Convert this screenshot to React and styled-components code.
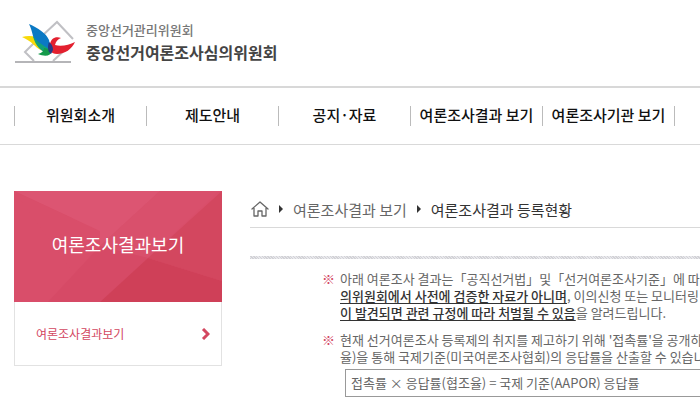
import React from 'react'
import styled, { createGlobalStyle } from 'styled-components';

const GlobalStyle = createGlobalStyle`
    *{
        box-sizing: border-box;
    }
    body{
        margin: 0;
        background: #fff;
        color: #666;
        font-family: 'Noto Sans CJK KR', 'Noto Sans', sans-serif;
        font-size: 13px;
        overflow-x: hidden;
    }
    a{
        color: inherit;
        text-decoration: none;
    }
    ul, ol, p, h2{
        margin: 0;
        padding: 0;
        list-style: none;
    }
`;

const menus = ['위원회소개', '제도안내', '공지·자료', '여론조사결과 보기', '여론조사기관 보기'];

function Logo() {
    return (
        <LogoLink href="#">
            <svg width="62" height="44" viewBox="0 0 62 44" aria-hidden="true">
                <path d="M28 15 L42 2 L58 19 M53 27 L38 41 M19 41 L10 32 L19 23" fill="none" stroke="#c0c0c4" strokeWidth="2" />
                <path d="M0 42 H56" stroke="#b5b5b8" strokeWidth="2" />
                <path d="M7 17 C14 15 22 16 27 20 L31 31 C26 31 22 28 19 25 C15 21 11 19 7 17Z" fill="#f8d908" />
                <path d="M14 4 C23 8 31 13 34 20 C35 24 35 28 34 33 C28 28 20 23 18 16 C17 12 16 8 14 4Z" fill="#0b79c4" />
                <path d="M18 16 C22 22 28 25 34 29 L33 34 C27 32 20 26 18 16Z" fill="#12a07a" />
                <path d="M60 22 C54 25 46 27 40 25 C41 21 43 19 46 18 C40 16 36 19 35 24 C34 30 36 34 42 34 C50 34 57 29 60 22Z" fill="#e3202f" />
                <path d="M23 34 C27 33 29 31 29 28 C33 29 36 29 37 31 C36 36 30 37 23 34Z" fill="#159a4b" />
                <path d="M34 22 C37 24 38 27 38 30 L36 34 C33 32 32 27 34 22Z" fill="#273a86" />
            </svg>
            <LogoText>
                <span>중앙선거관리위원회</span>
                <strong>중앙선거여론조사심의위원회</strong>
            </LogoText>
        </LogoLink>
    )
}

function SideMenu() {
    return (
        <Side>
            <SideTitle>
                <svg viewBox="0 0 208 111" preserveAspectRatio="none" aria-hidden="true">
                    <path d="M0 0 H208 V111 H0Z" fill="#d94e6a" />
                    <path d="M0 0 H146 L86 55 L58 27Z" fill="#dc5572" />
                    <path d="M0 0 L86 40 V55 L58 80Z" fill="#d94e6a" />
                    <path d="M146 0 H205 L134 67 L86 55Z" fill="#d9506c" />
                    <path d="M86 55 L134 67 L86 111 H34Z" fill="#d64a66" />
                    <path d="M208 0 L134 67 L208 90Z" fill="#d3475f" />
                    <path d="M134 67 L208 90 V111 H86Z" fill="#cf4058" />
                </svg>
                <h2>여론조사결과보기</h2>
            </SideTitle>
            <SideLink href="#">
                여론조사결과보기
                <svg width="9" height="12" viewBox="0 0 9 12" aria-hidden="true">
                    <path d="M2 1 L7 6 L2 11" fill="none" stroke="#d3475f" strokeWidth="3" />
                </svg>
            </SideLink>
        </Side>
    )
}

function Arrow() {
    return (
        <svg width="4" height="8" viewBox="0 0 4 8" aria-hidden="true">
            <path d="M0 0 L4 4 L0 8Z" fill="#333" />
        </svg>
    )
}

function Breadcrumb() {
    return (
        <Crumbs>
            <a href="#" aria-label="홈">
                <svg width="18" height="16" viewBox="0 0 18 16" aria-hidden="true">
                    <path d="M1 8 L9 1 L17 8 M3 7 V15 H7 V10 H11 V15 H15 V7" fill="none" stroke="#666" strokeWidth="1.3" strokeLinejoin="round" strokeLinecap="round" />
                </svg>
            </a>
            <Arrow />
            <a href="#">여론조사결과 보기</a>
            <Arrow />
            <Current href="#">여론조사결과 등록현황</Current>
        </Crumbs>
    )
}

function App() {
    return (
        <>
            <GlobalStyle />
            <Header>
                <Logo />
            </Header>
            <Nav>
                <ul>
                    {menus.map((menu) => (
                        <li key={menu}><a href="#">{menu}</a></li>
                    ))}
                </ul>
            </Nav>
            <Container>
                <SideMenu />
                <Content>
                    <Breadcrumb />
                    <Hatch />
                    <Notices>
                        <Notice>
                            아래 여론조사 결과는「공직선거법」및「선거여론조사기준」에 따라 등록된 자료로 중앙선거여론조사심<br />
                            <Underlined>의위원회에서 사전에 검증한 자료가 아니며</Underlined>, 이의신청 또는 모니터링 과정에서<br />
                            <Underlined>이 발견되면 관련 규정에 따라 처벌될 수 있음</Underlined>을 알려드립니다.
                        </Notice>
                        <Notice>
                            현재 선거여론조사 등록제의 취지를 제고하기 위해 '접촉률'을 공개하고 있으며<br />
                            율)을 통해 국제기준(미국여론조사협회)의 응답률을 산출할 수 있습니다.
                            <Formula>접촉률 × 응답률(협조율) = 국제 기준(AAPOR) 응답률</Formula>
                        </Notice>
                    </Notices>
                </Content>
            </Container>
        </>
    )
}

const Header = styled.header`
    padding: 20px 15px 22px;
    border-bottom: 2px solid #d8d8d8;
`;

const LogoLink = styled.a`
    display: flex;
    align-items: center;
    gap: 9px;
    height: 44px;
`;

const LogoText = styled.span`
    display: flex;
    flex-direction: column;
    white-space: nowrap;
    span{
        font-size: 13px;
        line-height: 20px;
        font-weight: 500;
        color: #777;
    }
    strong{
        font-size: 16px;
        line-height: 24px;
        color: #444;
    }
`;

const Nav = styled.nav`
    padding: 18px 14px;
    border-bottom: 1px solid #d9d9d9;
    ul{
        display: flex;
    }
    li{
        flex: none;
        width: 132px;
        height: 20px;
        border-left: 1px solid #bbb;
        white-space: nowrap;
        text-align: center;
        font-size: 15px;
        line-height: 18px;
        font-weight: 500;
        color: #111;
    }
    li:last-child{
        width: 133px;
        border-right: 1px solid #bbb;
    }
`;

const Container = styled.div`
    display: flex;
    align-items: flex-start;
    gap: 28px;
    padding: 46px 0 0 14px;
`;

const Side = styled.aside`
    flex: none;
    width: 208px;
`;

const SideTitle = styled.div`
    display: grid;
    height: 111px;
    svg, h2{
        grid-area: 1 / 1;
    }
    svg{
        width: 100%;
        height: 111px;
    }
    h2{
        position: relative;
        text-align: center;
        font-size: 18px;
        line-height: 106px;
        font-weight: 400;
        color: #fff;
    }
`;

const SideLink = styled.a`
    display: flex;
    align-items: center;
    justify-content: space-between;
    height: 64px;
    padding: 0 11px 0 21px;
    border: 1px solid #e2e2e2;
    border-top: 0;
    font-size: 12px;
    color: #d3475f;
`;

const Content = styled.main`
    flex: 1;
    min-width: 0;
    overflow: hidden;
    white-space: nowrap;
`;

const Crumbs = styled.nav`
    display: flex;
    align-items: center;
    gap: 10px;
    height: 37px;
    padding-left: 1px;
    border-bottom: 1px solid #d9d9d9;
    font-size: 15px;
    a{
        display: flex;
    }
`;

const Current = styled.a`
    color: #333;
`;

const Hatch = styled.div`
    height: 3px;
    margin-top: 28px;
    background: repeating-linear-gradient(45deg, #d2d2d6 0 1px, #e8e8ec 1px 2px);
`;

const Notices = styled.ul`
    display: flex;
    flex-direction: column;
    gap: 10px;
    padding: 11px 0 0 72px;
`;

const Notice = styled.li`
    position: relative;
    padding-left: 18px;
    line-height: 17px;
    &::before{
        content: '※';
        position: absolute;
        left: 0;
        top: 0;
        color: #d3475f;
    }
`;

const Underlined = styled.u`
    font-weight: 500;
    color: #333;
    text-underline-offset: 2px;
`;

const Formula = styled.p`
    margin: 4px -2px 0 5px;
    padding: 4px 5px;
    border: 1px solid #999;
    line-height: 18px;
`;

export default App;
